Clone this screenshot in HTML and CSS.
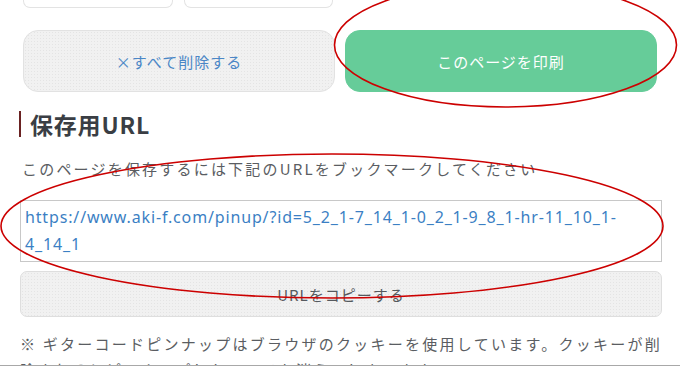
FILE: index.html
```html
<!DOCTYPE html>
<html lang="ja">
<head>
<meta charset="utf-8">
<link rel="stylesheet" href="styles.css">
</head>
<body>
<div class="page">
  <div class="cards">
    <div class="card"></div>
    <div class="card"></div>
  </div>
  <div class="actions">
    <button class="btn btn-clear">×すべて削除する</button>
    <button class="btn btn-print">このページを印刷</button>
  </div>
  <h2 class="heading">保存用URL</h2>
  <p class="lead">このページを保存するには下記のURLをブックマークしてください</p>
  <div class="urlbox">https://www.aki-f.com/pinup/?id=5_2_1-7_14_1-0_2_1-9_8_1-hr-11_10_1-4_14_1</div>
  <button class="copy">URLをコピーする</button>
  <div class="note">
    <p>※ ギターコードピンナップはブラウザのクッキーを使用しています。クッキーが削除されるとピンナップしたコードも消えてしまいます。</p>
  </div>
  <svg class="marks" width="680" height="374" viewBox="0 0 680 374">
    <ellipse cx="505.5" cy="65" rx="171" ry="62" fill="none" stroke="#cc0000" stroke-width="1.6"/>
    <ellipse cx="332" cy="246" rx="331" ry="72" fill="none" stroke="#cc0000" stroke-width="1.6"/>
  </svg>
</div>
</body>
</html>
```

FILE: styles.css
```css
* { box-sizing: border-box; }
html, body { margin: 0; padding: 0; background: #fff; }
body {
  font-family: "Noto Sans CJK JP", "Noto Sans", sans-serif;
  width: 680px;
  height: 374px;
  overflow: hidden;
}
.page {
  position: relative;
  padding: 0 18px 0 20px;
  height: 374px;
}
.cards {
  display: flex;
  gap: 11px;
  padding-left: 3px;
  margin-top: -20px;
  width: 313px;
}
.card {
  flex: 1;
  height: 28px;
  border: 1px solid #e3e3e3;
  border-top: none;
  border-radius: 0 0 7px 7px;
  background: #fff;
}
.actions {
  display: flex;
  gap: 10px;
  margin-top: 22px;
  padding-left: 3px;
  padding-right: 5px;
}
.btn {
  flex: 1;
  height: 62px;
  border-radius: 15px;
  font-family: "Noto Sans CJK JP", sans-serif;
  font-size: 15px;
  letter-spacing: 1px;
  padding: 0;
}
.btn-clear {
  background-color: #f1f1f1;
  background-image: radial-gradient(#e4e4e4 0.6px, transparent 0.8px);
  background-size: 3px 3px;
  border: 1px solid #e2e2e2;
  color: #4a86c6;
}
.btn-print {
  background: #66cc99;
  border: 1px solid #66cc99;
  color: #fff;
}
.heading {
  margin: 19px 0 0 -1px;
  border-left: 2px solid #6a2222;
  padding-left: 9px;
  font-size: 23px;
  line-height: 26px;
  font-weight: 700;
  color: #3a3e44;
  letter-spacing: 0.8px;
}
.lead {
  margin: 21px 0 0 2px;
  font-size: 15px;
  line-height: 22px;
  letter-spacing: 2.2px;
  color: #5a5d62;
}
.urlbox {
  margin-top: 20px;
  height: 62px;
  border: 1px solid #c8c8c8;
  padding: 3px 4px;
  font-family: "Noto Sans", sans-serif;
  font-size: 16px;
  line-height: 27px;
  letter-spacing: 0.85px;
  color: #3b7fc4;
  word-break: normal;
}
.copy {
  display: block;
  width: 100%;
  margin-top: 9px;
  height: 46px;
  border: 1px solid #dedede;
  border-radius: 7px;
  background-color: #f1f1f1;
  background-image: radial-gradient(#e4e4e4 0.6px, transparent 0.8px);
  background-size: 3px 3px;
  font-family: "Noto Sans CJK JP", sans-serif;
  font-size: 15px;
  letter-spacing: 1px;
  color: #55595e;
}
.note {
  margin: 14px -18px 0 -20px;
  padding: 0 18px 0 20px;
  height: 35px;
  overflow: hidden;
  border-bottom: 1px solid #a8a8a8;
}
.note p {
  margin: 0;
  font-size: 15px;
  line-height: 26px;
  letter-spacing: 2.25px;
  color: #5a5d62;
}
.marks {
  position: absolute;
  left: 0;
  top: 0;
  pointer-events: none;
}
```
